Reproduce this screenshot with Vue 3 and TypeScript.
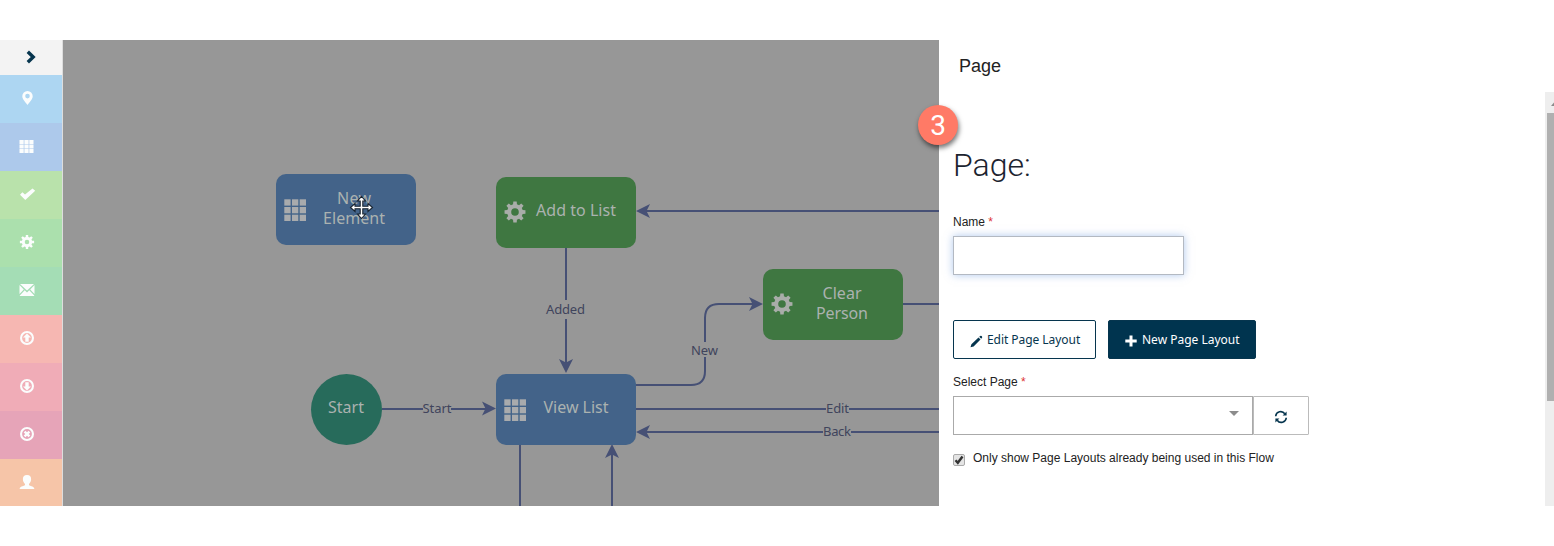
<script setup lang="ts">
interface Tool { name: string; color: string }
interface Label { text: string; x: number; y: number; w: number }
interface FlowNode { x: number; y: number; kind: 'page' | 'operator'; lines: Label[] }

const tools: Tool[] = [
  { name: 'pin', color: '#add6f2' },
  { name: 'grid', color: '#adc9eb' },
  { name: 'check', color: '#b9e2ab' },
  { name: 'cog', color: '#abe0ad' },
  { name: 'mail', color: '#a4ddb5' },
  { name: 'up', color: '#f6b7b2' },
  { name: 'down', color: '#f0acb7' },
  { name: 'close', color: '#e6a4b8' },
  { name: 'user', color: '#f6c5a8' },
]

const nodes: FlowNode[] = [
  { x: 276, y: 174, kind: 'page', lines: [
    { text: 'New', x: 354, y: 204, w: 34 }, { text: 'Element', x: 354, y: 224, w: 62 }] },
  { x: 496, y: 177, kind: 'operator', lines: [{ text: 'Add to List', x: 576, y: 216, w: 80 }] },
  { x: 763, y: 269, kind: 'operator', lines: [
    { text: 'Clear', x: 842, y: 299, w: 39 }, { text: 'Person', x: 842, y: 319, w: 52 }] },
  { x: 496, y: 374, kind: 'page', lines: [{ text: 'View List', x: 576, y: 413, w: 65 }] },
]

const edges: string[] = [
  'M645 211H939', 'M566 248V300M566 319V364', 'M636 385H691Q705 385 705 371V357M705 342V318Q705 304 719 304H754',
  'M903 304H939', 'M382 409H423M451 409H486', 'M636 409H826M849 409H939',
  'M645 432H823M851 432H939', 'M520 445V506', 'M612 454V506',
]

const arrows: string[] = [
  'translate(636 211) rotate(180)', 'translate(566 373) rotate(90)', 'translate(763 304)',
  'translate(496 408.500)', 'translate(636 432) rotate(180)', 'translate(612 444) rotate(-90)',
]

const edgeLabels: Label[] = [
  { text: 'Added', x: 565.5, y: 314, w: 39 },
  { text: 'New', x: 704.5, y: 355, w: 27 },
  { text: 'Start', x: 437, y: 413, w: 29 },
  { text: 'Edit', x: 837.5, y: 413, w: 23 },
  { text: 'Back', x: 837, y: 436, w: 28 },
]

function gear(outer: number, inner: number, hole: number): string {
  const pts: string[] = []
  for (let i = 0; i < 8; i++) {
    const a = (i * Math.PI) / 4
    for (const [off, r] of [[-0.25, inner], [-0.16, outer], [0.16, outer], [0.25, inner]]) {
      pts.push(`${(Math.sin(a + off) * r).toFixed(2)} ${(-Math.cos(a + off) * r).toFixed(2)}`)
    }
  }
  return `M${pts.join('L')}ZM${hole} 0A${hole} ${hole} 0 1 0 ${-hole} 0A${hole} ${hole} 0 1 0 ${hole} 0Z`
}

const cells = [0, 1, 2].flatMap((r) => [0, 1, 2].map((c) => ({ r, c })))
const ring = 'M0-7A7 7 0 1 1 0 7A7 7 0 1 1 0-7ZM0-4.900A4.900 4.900 0 1 0 0 4.900A4.900 4.900 0 1 0 0-4.900Z'
const glyphs: Record<string, string> = {
  pin: 'M0.500-7A5.200 5.200 0 0 1 5.700-1.800C5.700 1.300 2.200 4.300 0.500 7C-1.200 4.300-4.700 1.300-4.700-1.800A5.200 5.200 0 0 1 0.500-7ZM0.500-4.200A2.300 2.300 0 1 0 0.500 0.400A2.300 2.300 0 1 0 0.500-4.200Z',
  grid: 'M-7.500-6h4.200v3.900h-4.200zM-2.600-6h4.200v3.900h-4.200zM2.300-6h4.200v3.900h-4.200zM-7.500-1.500h4.200v3.900h-4.200zM-2.600-1.500h4.200v3.900h-4.200zM2.300-1.500h4.200v3.900h-4.200zM-7.500 3h4.200v3.900h-4.200zM-2.600 3h4.200v3.900h-4.200zM2.300 3h4.200v3.900h-4.200z',
  check: 'M-7 0.800L-4.600-1.700L-2 0.500L5.500-5.600L8.200-3.200L-1.700 6Z',
  cog: gear(7.2, 5.2, 2.3),
  mail: 'M-7-6H7L0 0.600ZM-7.500-5L-3.200-0.600L-7.500 3.900ZM7.500-5L3.200-0.600L7.500 3.900ZM-2.300 0.300L0 2.400L2.300 0.300L7.200 5.500V6H-7.200V5.500Z',
  up: ring + 'M0-4.500L4-0.500H1.700V3.800H-1.700V-0.500H-4Z',
  down: ring + 'M0 4.500L4 0.500H1.700V-3.800H-1.700V0.500H-4Z',
  close: ring + 'M-3.300-1.600L-1.600-3.300L0-1.700L1.600-3.300L3.300-1.600L1.700 0L3.300 1.600L1.600 3.300L0 1.700L-1.600 3.300L-3.300 1.600L-1.700 0Z',
  user: 'M0-7C3-7 4.400-5.400 4.100-2.300C3.900-0.300 2.800 1 2 2V3.300C4 4.300 7.300 4.500 7.300 7H-7.300C-7.300 4.500-4 4.300-2 3.300V2C-2.800 1-3.900-0.300-4.100-2.300C-4.400-5.400-3-7 0-7Z',
}
const nodeGear = gear(10.6, 7.9, 3.8)
</script>

<template>
  <div class="app">
    <nav class="rail">
      <button class="toggle" aria-label="Expand">
        <svg width="16" height="16" viewBox="-8 -8 16 16"><path d="M-3.200-5.200L2.200 0L-3.200 5.200" fill="none" stroke="#06354e" stroke-width="3.400" /></svg>
      </button>
      <button v-for="t in tools" :key="t.name" class="tool" :style="{ background: t.color }" :aria-label="t.name">
        <svg width="18" height="18" viewBox="-9 -9 18 18"><path :d="glyphs[t.name]" fill="#fbfdfd" fill-rule="evenodd" /></svg>
      </button>
    </nav>

    <main class="canvas">
      <svg width="876" height="466" viewBox="63 40 876 466">
        <path v-for="d in edges" :key="d" :d="d" class="edge" />
        <path v-for="a in arrows" :key="a" :transform="a" d="M0 0L-14-7L-10.500 0L-14 7Z" fill="#465075" />
        <text v-for="l in edgeLabels" :key="l.text + l.y" :x="l.x" :y="l.y" :textLength="l.w" class="edge-label">{{ l.text }}</text>
        <g v-for="n in nodes" :key="n.x + '-' + n.y">
          <rect :x="n.x" :y="n.y" width="140" height="71" rx="10" :class="n.kind" />
          <g v-if="n.kind === 'page'" fill="#a9abad">
            <rect v-for="p in cells" :key="p.r + '-' + p.c" :x="n.x + 8.300 + p.c * 7.700" :y="n.y + 25.300 + p.r * 7.700" width="6.300" height="6.300" />
          </g>
          <path v-else :transform="`translate(${n.x + 19} ${n.y + 35})`" :d="nodeGear" fill="#a9ada9" fill-rule="evenodd" />
          <text v-for="l in n.lines" :key="l.text" :x="l.x" :y="l.y" :textLength="l.w" class="node-label">{{ l.text }}</text>
        </g>
        <circle cx="346.500" cy="409.500" r="35.500" fill="#276b5b" />
        <text x="346" y="413" textLength="36" class="node-label">Start</text>
        <path
          transform="translate(361.500 207.500)"
          d="M0-11L4-6.500H1.300V-1.300H6.500V-4L11 0L6.500 4V1.300H1.300V6.500H4L0 11L-4 6.500H-1.300V1.300H-6.500V4L-11 0L-6.500-4V-1.300H-1.300V-6.500H-4Z"
          fill="#fff" stroke="#17222e" stroke-width="1.100"
        />
      </svg>
    </main>

    <aside class="panel">
      <span class="badge">3</span>
      <header class="panel-title">Page</header>
      <div class="panel-body">
        <h1>Page:</h1>
        <label class="name-label">Name <i>*</i></label>
        <input class="name" type="text">
        <div class="buttons">
          <button class="btn edit">
            <svg width="13" height="13" viewBox="0 0 13 13"><path d="M0.500 12.300L1.400 9.200L8.500 2.500L10.500 4.500L3.600 11.400ZM9.200 1.800L10.300 0.900Q11 0.500 11.600 1.100L12 1.500Q12.500 2.200 12 2.800L11.200 3.800Z" fill="#06354e" /></svg>
            <span>Edit Page Layout</span>
          </button>
          <button class="btn new">
            <svg width="12" height="12" viewBox="0 0 12 12"><path d="M4.500 0.500H7.500V4.500H11.700V7.500H7.500V11.500H4.500V7.500H0.300V4.500H4.500Z" fill="#fff" /></svg>
            <span>New Page Layout</span>
          </button>
        </div>
        <label class="select-label">Select Page <i>*</i></label>
        <div class="select-row">
          <div class="select"><span class="caret"></span></div>
          <button class="refresh" aria-label="Refresh">
            <svg width="14" height="14" viewBox="0 0 14 14">
              <path d="M1.700 6.200A5 5 0 0 1 10.800 3.800M12.300 7.800A5 5 0 0 1 3.200 10.200" fill="none" stroke="#06354e" stroke-width="1.600" />
              <path d="M12.600 1.400V5.400H8.600ZM1.400 12.600V8.600H5.400Z" fill="#06354e" />
            </svg>
          </button>
        </div>
        <div class="check-row">
          <span class="checkbox"><svg width="10" height="10" viewBox="0 0 10 10"><path d="M1.500 5.300L3.800 7.800L8.500 1.500" fill="none" stroke="#333" stroke-width="2.400" /></svg></span>
          <span>Only show Page Layouts already being used in this Flow</span>
        </div>
      </div>
      <div class="scrollbar">
        <svg width="9" height="21" viewBox="0 0 9 21"><path d="M6 14L9 10.500V14Z" fill="#8b8b8b" /></svg>
        <div class="thumb"></div>
      </div>
    </aside>
  </div>
</template>

<style>
body { margin: 0; background: #fff; overflow: hidden; }
</style>

<style scoped>
* { box-sizing: border-box; }
.app { display: flex; width: 1554px; height: 546px; padding: 40px 0; background: #fff; font-family: "Liberation Sans", Arial, sans-serif; color: #222; }
button { border: 0; padding: 0; margin: 0; font: inherit; }
.rail { width: 63px; height: 466px; border-right: 1px solid #ddd; display: flex; flex-direction: column; overflow: hidden; }
.toggle { height: 35px; flex: none; background: #f3f3f3; display: flex; align-items: center; justify-content: center; padding: 0 0 2px 0; }
.tool { height: 48px; flex: none; display: flex; align-items: center; padding: 0 0 3px 18px; }
.canvas { width: 876px; height: 466px; background: #979797; }
.canvas svg { display: block; }
.edge { fill: none; stroke: #465075; stroke-width: 2; }
.edge-label, .node-label { font-family: "Noto Sans", sans-serif; text-anchor: middle; }
.edge-label { font-size: 13px; fill: #40445c; }
.node-label { font-size: 16px; fill: #abb2b0; }
.page { fill: #436389; }
.operator { fill: #3f7741; }
.panel { position: relative; width: 615px; height: 466px; background: #fff; }
.badge { position: absolute; left: -21px; top: 65px; width: 40px; height: 40px; border-radius: 50%; background: #ff7a66; color: #fff; font: 28px/42px Roboto, sans-serif; text-align: center; box-shadow: 1px 3px 5px rgba(0,0,0,.55); }
.panel-title { height: 52px; padding-left: 20px; font-size: 18px; line-height: 52px; color: #222; }
.panel-body { padding-left: 14px; font-size: 12px; }
h1 { margin: 0; padding-top: 52px; font: 300 32px/42px Roboto, sans-serif; color: #1c2430; }
label { display: block; line-height: 14px; }
i { font-style: normal; color: #d33; }
.name-label { margin-top: 29px; }
.name { display: block; width: 231px; height: 39px; margin-top: 7px; border: 1px solid #b3b9c2; outline: 0; box-shadow: 0 0 8px rgba(110,155,220,.55); }
.buttons { display: flex; gap: 12px; margin-top: 45px; font-family: "Noto Sans", sans-serif; }
.btn { height: 39px; display: flex; align-items: center; border: 1px solid #06354e; border-radius: 2px; }
.btn span { font-size: 12px; white-space: nowrap; }
.btn svg { margin-top: 3px; }
.edit { width: 143px; padding-left: 16px; gap: 4px; background: #fff; color: #06354e; }
.edit span { letter-spacing: -0.050px; }
.new { width: 148px; padding-left: 16px; gap: 5px; background: #00344f; color: #fff; }
.select-label { margin-top: 16px; }
.select-row { display: flex; margin-top: 7px; }
.select { width: 300px; height: 39px; border: 1px solid #aaa; display: flex; justify-content: flex-end; padding: 14px 13px 0 0; }
.caret { width: 0; height: 0; border: 5px solid transparent; border-top-color: #8c8c8c; border-bottom: 0; }
.refresh { width: 56px; height: 39px; border: 1px solid #bbb; border-radius: 0 1px 1px 0; background: #fff; display: flex; align-items: center; justify-content: center; padding-top: 3px; }
.check-row { display: flex; gap: 8px; margin-top: 16px; line-height: 14px; white-space: nowrap; }
.checkbox { width: 12px; height: 12px; margin-top: 3px; border: 1px solid #aaa; background: #e4e4e4; border-radius: 2px; }
.checkbox svg { display: block; }
.scrollbar { position: absolute; right: 0; top: 52px; width: 9px; height: 414px; background: #eee; }
.scrollbar svg { display: block; }
.thumb { height: 288px; margin-left: 2px; background: #b0b0b0; }
</style>
